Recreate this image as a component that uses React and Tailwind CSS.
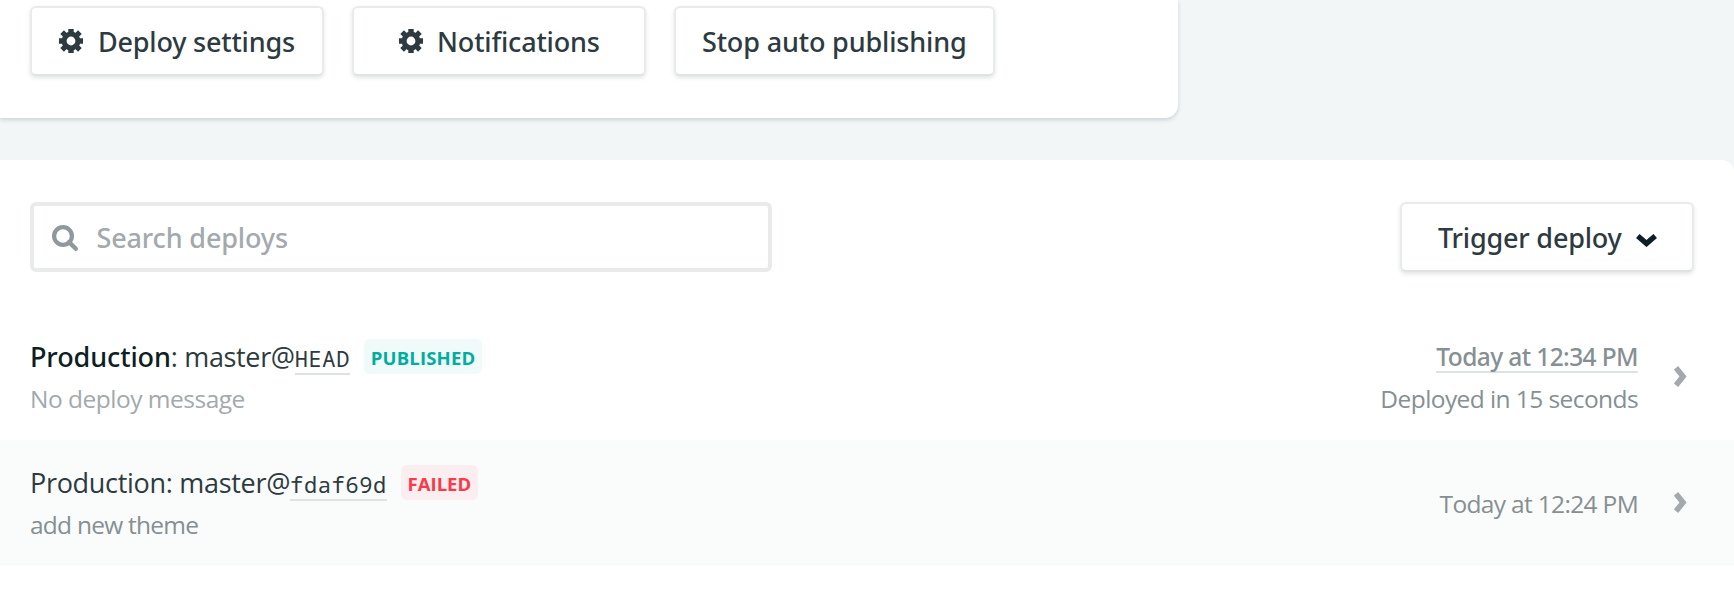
function Gear() {
  return (
    <svg viewBox="-12 -12 24 24" className="size-6 shrink-0" fill="none" stroke="currentColor">
      <circle r="6.9" strokeWidth="5" />
      <path d="M0 -12V-8M0 8V12M-12 0H-8M8 0H12" strokeWidth="5.4" />
      <path d="M-8.9 -8.9L-5 -5M8.9 -8.9L5 -5M-8.9 8.9L-5 5M8.9 8.9L5 5" strokeWidth="5.2" />
    </svg>
  );
}

function SearchIcon() {
  return (
    <svg viewBox="0 0 27 27" className="mt-0.5 size-[27px] shrink-0" fill="none" stroke="currentColor">
      <circle cx="11" cy="11" r="8.9" strokeWidth="4.2" />
      <path d="M17 17L23.8 23.8" strokeWidth="4.4" strokeLinecap="round" />
    </svg>
  );
}

function ChevronDown() {
  return (
    <svg viewBox="0 0 21 13" className="h-[13px] w-[21px] shrink-0" fill="none" stroke="currentColor">
      <path d="M1.8 2L10.5 9.5L19.2 2" strokeWidth="5.4" />
    </svg>
  );
}

function ChevronRight() {
  return (
    <svg viewBox="0 0 13 21" className="mb-px h-[21px] w-[13px] shrink-0 text-[#a3a9ac]" fill="none" stroke="currentColor">
      <path d="M2 1.8L9 10.5L2 19.2" strokeWidth="5.6" />
    </svg>
  );
}

function Button({ className, children }) {
  return (
    <button
      className={`flex h-[70px] shrink-0 items-center rounded-md border-2 border-[#e9ebeb] border-b-[#e0e3e3] bg-white font-['Noto_Sans',sans-serif] text-[27px] leading-none font-medium whitespace-nowrap text-[#2d3b41] shadow-[0_2px_4px_rgba(14,30,37,0.12)] ${className}`}
    >
      {children}
    </button>
  );
}

function Commit({ children }) {
  return (
    <span className="mt-px h-9 border-b-2 border-[#dfe2e2] pt-[3px] font-['Noto_Sans_Mono','DejaVu_Sans_Mono',monospace] text-[22px] leading-[32px] tracking-[0.63px]">
      {children}
    </span>
  );
}

export default function App() {
  return (
    <div className="flex h-[591px] w-[1734px] flex-col gap-[42px] overflow-hidden bg-[#f2f6f7] font-['Open_Sans',sans-serif] text-[#2d3b41]">
      <section className="flex h-[118px] w-[1178px] gap-7 rounded-br-[13px] bg-white pt-1.5 pl-[30px] shadow-[0_2px_4px_rgba(14,30,37,0.16)]">
        <Button className="w-[294px] gap-[15px] pl-[27px] tracking-[-0.2px]">
          <Gear />
          <span className="pt-px">Deploy settings</span>
        </Button>
        <Button className="w-[294px] gap-[14px] pl-[45px] tracking-[-0.16px]">
          <Gear />
          <span className="pt-px">Notifications</span>
        </Button>
        <Button className="w-[321px] pt-px pl-[26px] tracking-[-0.16px]">Stop auto publishing</Button>
      </section>

      <section className="flex grow flex-col rounded-tr-[12px] bg-white pt-[42px]">
        <div className="flex h-28 items-start justify-between pr-10 pl-[30px]">
          <label className="flex h-[70px] w-[742px] items-center gap-[17.5px] rounded-md border-4 border-[#e9ebeb] pl-[18px] text-[#8f989c]">
            <SearchIcon />
            <span className="pt-px font-['Noto_Sans',sans-serif] text-[27px] leading-none font-medium tracking-[-0.15px] text-[#a3a9ac]">
              Search deploys
            </span>
          </label>
          <Button className="w-[294px] gap-[14px] pl-9 tracking-[-0.2px]">
            <span className="pt-px">Trigger deploy</span>
            <span className="pt-[7px] text-[#0e1e25]">
              <ChevronDown />
            </span>
          </Button>
        </div>

        <ul>
          <li className="flex h-[126px] items-center justify-between pr-[47px] pl-[30px]">
            <div className="flex flex-col">
              <div className="flex h-[42px] items-center text-[27px] leading-[42px]">
                <span className="pt-0.5 font-['Noto_Sans',sans-serif] font-medium tracking-[-0.1px] text-[#0e1e25]">Production</span>
                <span className="pt-0.5 tracking-[-0.35px]">: master@</span>
                <Commit>HEAD</Commit>
                <span className="ml-3.5 flex h-[35px] w-[118px] items-center justify-center rounded-md bg-[#f0faf9] pt-1 text-[18.5px] leading-none font-bold tracking-[0.2px] text-[#00ad9f]">
                  PUBLISHED
                </span>
              </div>
              <div className="-mb-px pt-px text-[24.5px] leading-[42px] tracking-[-0.5px] text-[#a3a9ac]">No deploy message</div>
            </div>
            <div className="flex items-center gap-9">
              <div className="flex flex-col items-end text-[24.5px] text-[#868f92]">
                <div className="flex h-[42px] items-center pt-0.5">
                  <span className="h-8 border-b-2 border-[#dfe2e2] font-['Noto_Sans',sans-serif] leading-[31px] font-medium tracking-[-0.6px]">
                    Today at 12:34 PM
                  </span>
                </div>
                <div className="-mb-px pt-px leading-[42px] tracking-[-0.58px]">Deployed in 15 seconds</div>
              </div>
              <ChevronRight />
            </div>
          </li>
          <li className="flex h-[126px] items-center justify-between bg-[#fafcfb] pr-[47px] pl-[30px]">
            <div className="flex flex-col">
              <div className="flex h-[42px] items-center text-[27px] leading-[42px]">
                <span className="pt-0.5 tracking-[-0.3px]">Production: master@</span>
                <Commit>fdaf69d</Commit>
                <span className="ml-3.5 flex h-[35px] w-[77px] items-center justify-center rounded-md bg-[#faeef0] pt-1 text-[18.5px] leading-none font-bold text-[#fb3a49]">
                  FAILED
                </span>
              </div>
              <div className="-mb-px pt-px text-[24.5px] leading-[42px] tracking-[-0.75px] text-[#868f92]">add new theme</div>
            </div>
            <div className="flex items-center gap-9">
              <span className="pt-px text-[24.5px] leading-[42px] tracking-[-0.67px] text-[#868f92]">Today at 12:24 PM</span>
              <ChevronRight />
            </div>
          </li>
        </ul>
      </section>
    </div>
  );
}
